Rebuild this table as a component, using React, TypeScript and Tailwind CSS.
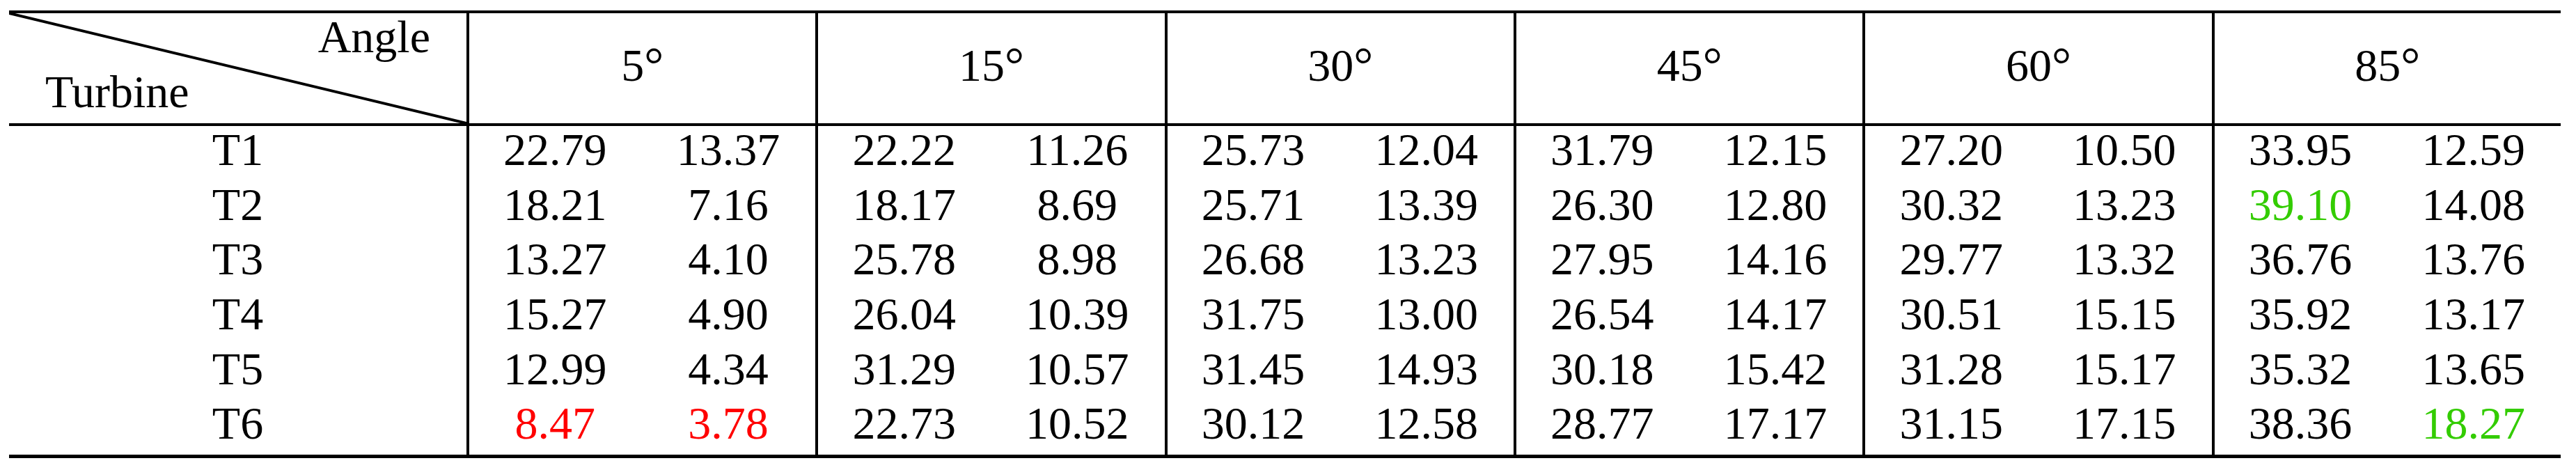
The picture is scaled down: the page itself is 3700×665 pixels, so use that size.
const angles = ["5", "15", "30", "45", "60", "85"];

type Cell = { v: string; c?: "red" | "green" };

const rows: { name: string; cells: Cell[] }[] = [
  {
    name: "T1",
    cells: ["22.79", "13.37", "22.22", "11.26", "25.73", "12.04", "31.79", "12.15", "27.20", "10.50", "33.95", "12.59"].map((v) => ({ v })),
  },
  {
    name: "T2",
    cells: [
      { v: "18.21" }, { v: "7.16" }, { v: "18.17" }, { v: "8.69" }, { v: "25.71" }, { v: "13.39" },
      { v: "26.30" }, { v: "12.80" }, { v: "30.32" }, { v: "13.23" }, { v: "39.10", c: "green" }, { v: "14.08" },
    ],
  },
  {
    name: "T3",
    cells: ["13.27", "4.10", "25.78", "8.98", "26.68", "13.23", "27.95", "14.16", "29.77", "13.32", "36.76", "13.76"].map((v) => ({ v })),
  },
  {
    name: "T4",
    cells: ["15.27", "4.90", "26.04", "10.39", "31.75", "13.00", "26.54", "14.17", "30.51", "15.15", "35.92", "13.17"].map((v) => ({ v })),
  },
  {
    name: "T5",
    cells: ["12.99", "4.34", "31.29", "10.57", "31.45", "14.93", "30.18", "15.42", "31.28", "15.17", "35.32", "13.65"].map((v) => ({ v })),
  },
  {
    name: "T6",
    cells: [
      { v: "8.47", c: "red" }, { v: "3.78", c: "red" }, { v: "22.73" }, { v: "10.52" }, { v: "30.12" }, { v: "12.58" },
      { v: "28.77" }, { v: "17.17" }, { v: "31.15" }, { v: "17.15" }, { v: "38.36" }, { v: "18.27", c: "green" },
    ],
  },
];

const colorClass = (c?: "red" | "green") =>
  c === "red" ? "text-[#ff0000]" : c === "green" ? "text-[#33cc00]" : "text-black";

export default function App() {
  return (
    <div
      className="min-h-screen bg-white pt-[15px] pl-[13px] text-[66px] text-black"
      style={{ fontFamily: '"Liberation Serif", "Times New Roman", serif' }}
    >
      <div className="w-[3665px]">
        {/* header */}
        <div className="grid h-[166px] grid-cols-[657px_repeat(6,minmax(0,1fr))] border-y-4 border-black">
          <div className="relative flex flex-col px-[52px] pt-px leading-[66px]">
            <svg
              className="absolute inset-0 h-full w-full"
              viewBox="0 0 657 158"
              preserveAspectRatio="none"
            >
              <line x1="0" y1="0" x2="657" y2="158" stroke="black" strokeWidth="4" />
            </svg>
            <span className="self-end">Angle</span>
            <span className="mt-[13px] self-start">Turbine</span>
          </div>
          {angles.map((a) => (
            <div key={a} className="border-l-4 border-black pt-[41px] text-center leading-[66px]">
              {a}
              <span className="text-[70px] font-light">°</span>
            </div>
          ))}
        </div>

        {/* body */}
        <div className="grid auto-rows-[78.67px] grid-cols-[657px_repeat(12,minmax(0,1fr))] border-b-[5px] border-black leading-[66px]">
          {rows.map((r) => (
            <div key={r.name} className="contents">
              <div className="pt-px text-center">{r.name}</div>
              {r.cells.map((cell, i) => (
                <div
                  key={i}
                  className={`pt-px text-center ${colorClass(cell.c)} ${
                    i % 2 === 0 ? "border-l-4 border-black" : ""
                  }`}
                >
                  {cell.v}
                </div>
              ))}
            </div>
          ))}
        </div>
      </div>
    </div>
  );
}
